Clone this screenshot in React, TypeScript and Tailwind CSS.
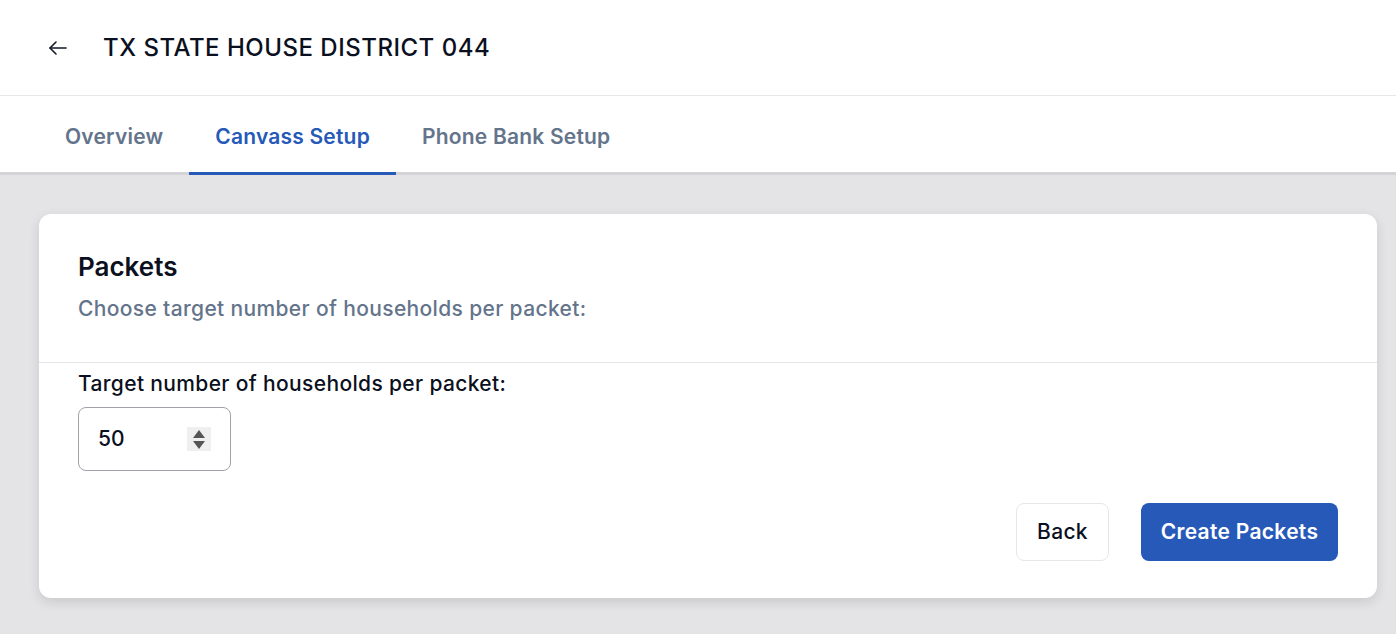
import React, { useState } from 'react';

const tabs = ['Overview', 'Canvass Setup', 'Phone Bank Setup'];

const App: React.FC = () => {
  const [activeTab, setActiveTab] = useState('Canvass Setup');
  const [target, setTarget] = useState('50');

  return (
    <div className="min-h-screen bg-[#e4e4e7] font-['Inter',sans-serif] text-[#0b1020]">
      {/* header */}
      <header className="bg-white">
        <div className="flex h-[96px] items-center border-b border-[#e5e7eb] pl-[46px]">
          <button type="button" className="mr-[33px] flex h-6 w-6 items-center justify-center text-[#111827]">
            <svg width="26" height="26" viewBox="0 0 24 24" fill="none" stroke="currentColor" strokeWidth="1.6" strokeLinecap="round" strokeLinejoin="round">
              <path d="M20 12H4" />
              <path d="M10 6l-6 6 6 6" />
            </svg>
          </button>
          <h1 className="text-[24px] font-medium tracking-[0.5px]">TX STATE HOUSE DISTRICT 044</h1>
        </div>
        <nav className="flex h-[79px] items-stretch border-b-[3px] border-[#d4d4d8] pl-[39px]">
          {tabs.map((tab) => {
            const active = tab === activeTab;
            return (
              <button
                key={tab}
                type="button"
                onClick={() => setActiveTab(tab)}
                className={
                  active
                    ? 'mb-[-3px] border-b-[3px] border-[#2659b8] px-[26px] pt-[6px] text-[21px] font-semibold tracking-[0.2px] text-[#2659b8]'
                    : 'px-[26px] pt-[6px] text-[21px] font-semibold tracking-[0.2px] text-[#64748b]'
                }
              >
                {tab}
              </button>
            );
          })}
        </nav>
      </header>

      {/* content */}
      <main className="pl-[39px] pr-[19px] pt-[39px]">
        <div className="rounded-[12px] bg-white shadow-[0_4px_12px_rgba(0,0,0,0.12)]">
          <div className="border-b border-[#e5e7eb] px-[39px] pt-[37px] pb-[40px]">
            <h2 className="text-[26px] font-semibold leading-[32px]">Packets</h2>
            <p className="mt-[13px] text-[21px] font-medium leading-[26px] tracking-[0.35px] text-[#64748b]">
              Choose target number of households per packet:
            </p>
          </div>
          <div className="px-[39px] pt-[7px] pb-[37px]">
            <label htmlFor="targetHouseholds" className="block text-[21px] font-medium leading-[28px] tracking-[0.35px]">
              Target number of households per packet:
            </label>
            <div className="mt-[9px] flex h-[64px] w-[153px] items-center rounded-[8px] border border-[#a1a1aa] pl-[19px] pr-[19px]">
              <input
                id="targetHouseholds"
                type="text"
                value={target}
                onChange={(e) => setTarget(e.target.value)}
                className="w-full bg-transparent text-[21px] font-medium outline-none"
              />
              <div className="flex h-[24px] w-[24px] shrink-0 flex-col items-center justify-center gap-[3px] bg-[#efefef]">
                <svg width="12" height="8" viewBox="0 0 12 8"><path d="M6 0L12 8H0z" fill="#555" /></svg>
                <svg width="12" height="8" viewBox="0 0 12 8"><path d="M0 0H12L6 8z" fill="#555" /></svg>
              </div>
            </div>
            <div className="mt-[32px] flex justify-end gap-[32px]">
              <button
                type="button"
                className="h-[58px] w-[93px] rounded-[8px] border border-[#e5e7eb] bg-white text-[21px] font-medium tracking-[0.3px]"
              >
                Back
              </button>
              <button
                type="button"
                className="h-[58px] w-[197px] rounded-[8px] bg-[#2659b8] text-[21px] font-semibold tracking-[0.3px] text-white"
              >
                Create Packets
              </button>
            </div>
          </div>
        </div>
      </main>
    </div>
  );
};

export default App;
